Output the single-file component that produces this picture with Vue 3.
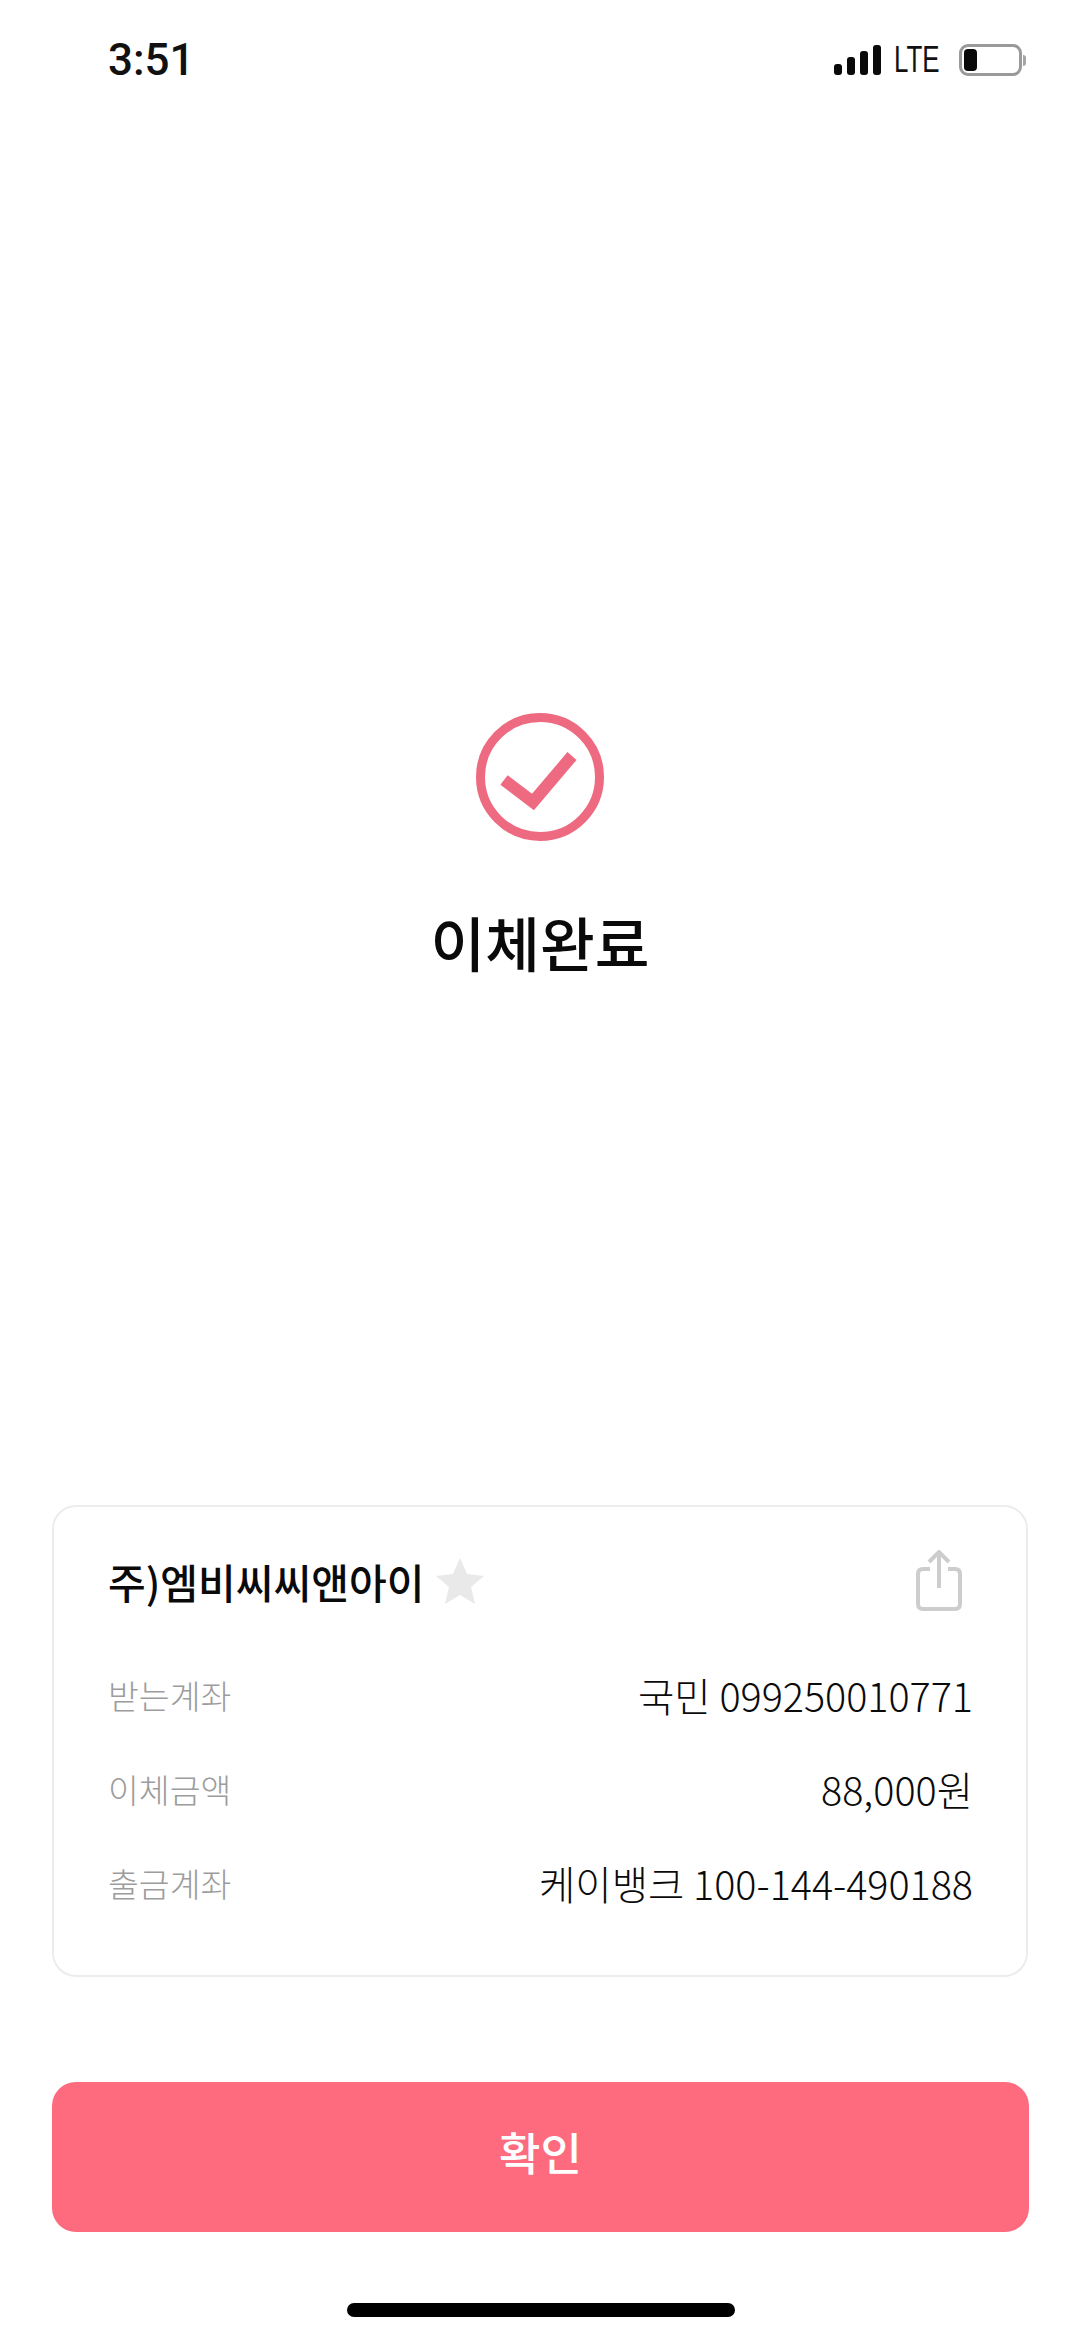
<template>
  <div class="screen">
    <div class="status-bar">
      <span class="time">3:51</span>
      <div class="status-right">
        <div class="signal">
          <i v-for="h in signalBars" :key="h" class="bar" :style="{ height: h + 'px' }"></i>
        </div>
        <span class="lte">LTE</span>
        <div class="battery">
          <div class="battery-level"></div>
        </div>
        <div class="battery-nub"></div>
      </div>
    </div>

    <div class="result">
      <svg class="check" width="128" height="128" viewBox="0 0 128 128">
        <circle cx="64" cy="64" r="59.5" fill="none" stroke="#ee6a80" stroke-width="9" />
        <path d="M28 67 L57 89 L96 43" fill="none" stroke="#ee6a80" stroke-width="12" />
      </svg>
      <h1 class="title">이체완료</h1>
    </div>

    <div class="card">
      <div class="card-head">
        <div class="name-wrap">
          <span class="name">주)엠비씨씨앤아이</span>
          <svg class="star" width="50" height="48" viewBox="0 0 50 48">
            <polygon points="25,1 32,17 49,19 36,30 40,47 25,38 10,47 14,30 1,19 18,17" fill="#e9e9e9" />
          </svg>
        </div>
        <svg class="share" width="48" height="62" viewBox="0 0 48 62">
          <path d="M15 19 H8 Q3 19 3 24 V54 Q3 59 8 59 H40 Q45 59 45 54 V24 Q45 19 40 19 H33" fill="none" stroke="#cdcdcd" stroke-width="4" />
          <path d="M24 38 V3 M14 12 L24 2 L34 12" fill="none" stroke="#cdcdcd" stroke-width="4" />
        </svg>
      </div>
      <div class="rows">
        <div v-for="row in rows" :key="row.label" class="row">
          <span class="label">{{ row.label }}</span>
          <span class="value">{{ row.value }}</span>
        </div>
      </div>
    </div>

    <button class="confirm">확인</button>

    <div class="home-wrap">
      <div class="home-bar"></div>
    </div>
  </div>
</template>

<script setup>
const signalBars = [11, 18, 24, 30]

const rows = [
  { label: '받는계좌', value: '국민 099250010771' },
  { label: '이체금액', value: '88,000원' },
  { label: '출금계좌', value: '케이뱅크 100-144-490188' }
]
</script>

<style>
html,
body {
  margin: 0;
  background: #fff;
}
</style>

<style scoped>
.screen {
  width: 1080px;
  height: 2337px;
  overflow: hidden;
  display: flex;
  flex-direction: column;
  background: #fff;
  font-family: "Noto Sans CJK KR", "Noto Sans", sans-serif;
  color: #0a0a0a;
}
.status-bar {
  height: 120px;
  box-sizing: border-box;
  padding: 0 54px 0 108px;
  display: flex;
  justify-content: space-between;
  align-items: flex-start;
}
.time {
  margin-top: 34px;
  font-family: Roboto, sans-serif;
  font-weight: 500;
  font-size: 44px;
  line-height: 52px;
  color: #111;
}
.status-right {
  margin-top: 44px;
  display: flex;
  align-items: center;
  height: 32px;
}
.signal {
  display: flex;
  align-items: flex-end;
  gap: 5px;
  height: 30px;
}
.bar {
  display: block;
  width: 8px;
  background: #0a0a0a;
  border-radius: 3px;
}
.lte {
  margin-left: 13px;
  width: 50px;
  font-family: "Liberation Sans", sans-serif;
  font-size: 36px;
  line-height: 32px;
  color: #111;
  transform: scaleX(0.72);
  transform-origin: left center;
}
.battery {
  margin-left: 15px;
  width: 63px;
  height: 32px;
  box-sizing: border-box;
  border: 3px solid #9a9a9a;
  border-radius: 9px;
  padding: 2px;
}
.battery-level {
  width: 13px;
  height: 100%;
  background: #0a0a0a;
  border-radius: 4px;
}
.battery-nub {
  margin-left: 1px;
  width: 3px;
  height: 11px;
  background: #a5a5a5;
  border-radius: 0 3px 3px 0;
}
.result {
  padding-top: 593px;
  display: flex;
  flex-direction: column;
  align-items: center;
}
.check {
  display: block;
}
.title {
  margin: 58px 0 0;
  font-size: 59.5px;
  font-weight: 500;
  line-height: 84px;
  color: #0a0a0a;
}
.card {
  margin: 522px 52px 0;
  height: 472px;
  box-sizing: border-box;
  border: 2px solid #ececec;
  border-radius: 24px;
  background: #fff;
  padding: 30px 53px 0 54px;
}
.card-head {
  display: flex;
  justify-content: space-between;
  align-items: center;
  height: 88px;
}
.name-wrap {
  display: flex;
  align-items: center;
  gap: 11px;
}
.name {
  font-size: 41px;
  font-weight: 500;
  line-height: 60px;
}
.share {
  display: block;
  margin-right: 10px;
}
.rows {
  margin-top: 39px;
  display: flex;
  flex-direction: column;
  gap: 34px;
}
.row {
  display: flex;
  justify-content: space-between;
  align-items: center;
  height: 60px;
}
.label {
  font-size: 33.5px;
  font-weight: 300;
  color: #9c9c9c;
}
.value {
  font-size: 39.5px;
  font-weight: 300;
  color: #0a0a0a;
}
.confirm {
  display: block;
  margin: 105px 51px 0 52px;
  width: 977px;
  height: 150px;
  border: 0;
  padding: 0 0 12px;
  border-radius: 24px;
  background: #fe6b7f;
  color: #fff;
  font-family: inherit;
  font-size: 45px;
  font-weight: 500;
}
.home-wrap {
  display: flex;
  justify-content: center;
  padding: 71px 0 0 2px;
}
.home-bar {
  width: 388px;
  height: 14px;
  border-radius: 7px;
  background: #000;
}
</style>
